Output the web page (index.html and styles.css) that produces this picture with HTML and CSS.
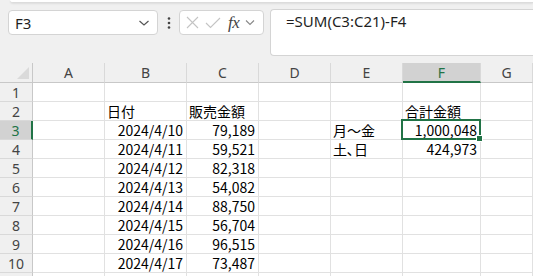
FILE: index.html
```html
<!DOCTYPE html>
<html lang="ja">
<head>
  <meta charset="UTF-8">
  <meta name="viewport" content="width=device-width, initial-scale=1.0">
  <title>Sheet1</title>
  <link rel="stylesheet" href="styles.css">
</head>
<body>
  <div class="ribbon-edge"></div>

  <div class="toolbar">
    <div class="name-box">
      <span>F3</span>
      <svg class="chev" width="12" height="8" viewBox="0 0 12 8"><path d="M1.5 2 L6 6 L10.5 2" fill="none" stroke="#555" stroke-width="1.2"/></svg>
    </div>
    <div class="dots">
      <svg width="4" height="12" viewBox="0 0 4 12"><circle cx="2" cy="1.5" r="1.3" fill="#444"/><circle cx="2" cy="6" r="1.3" fill="#444"/><circle cx="2" cy="10.5" r="1.3" fill="#444"/></svg>
    </div>
    <div class="fx-box">
      <svg width="13" height="13" viewBox="0 0 13 13"><path d="M1 1 L12 12 M12 1 L1 12" stroke="#c4c4c4" stroke-width="1.1"/></svg>
      <svg width="16" height="12" viewBox="0 0 16 12"><path d="M1 6 L5.5 10.5 L15 1" fill="none" stroke="#c4c4c4" stroke-width="1.1"/></svg>
      <span class="fx">fx</span>
      <svg width="10" height="7" viewBox="0 0 10 7"><path d="M1 1.5 L5 5.5 L9 1.5" fill="none" stroke="#888" stroke-width="1.1"/></svg>
    </div>
    <div class="formula">=SUM(C3:C21)-F4</div>
  </div>

  <div class="sheet">
    <div class="hd corner"><span class="tri"></span></div>
    <div class="hd col">A</div>
    <div class="hd col">B</div>
    <div class="hd col">C</div>
    <div class="hd col">D</div>
    <div class="hd col">E</div>
    <div class="hd col on">F</div>
    <div class="hd col">G</div>

    <div class="hd row">1</div>
    <div class="c"></div><div class="c"></div><div class="c"></div><div class="c"></div><div class="c"></div><div class="c"></div><div class="c"></div>

    <div class="hd row">2</div>
    <div class="c"></div><div class="c jp">日付</div><div class="c jp">販売金額</div><div class="c"></div><div class="c"></div><div class="c jp">合計金額</div><div class="c"></div>

    <div class="hd row on">3</div>
    <div class="c"></div><div class="c num">2024/4/10</div><div class="c num">79,189</div><div class="c"></div><div class="c jp">月～金</div>
    <div class="c num active">1,000,048<span class="sel"><span class="handle"></span></span></div><div class="c"></div>

    <div class="hd row">4</div>
    <div class="c"></div><div class="c num">2024/4/11</div><div class="c num">59,521</div><div class="c"></div><div class="c jp">土､日</div><div class="c num">424,973</div><div class="c"></div>

    <div class="hd row">5</div>
    <div class="c"></div><div class="c num">2024/4/12</div><div class="c num">82,318</div><div class="c"></div><div class="c"></div><div class="c"></div><div class="c"></div>

    <div class="hd row">6</div>
    <div class="c"></div><div class="c num">2024/4/13</div><div class="c num">54,082</div><div class="c"></div><div class="c"></div><div class="c"></div><div class="c"></div>

    <div class="hd row">7</div>
    <div class="c"></div><div class="c num">2024/4/14</div><div class="c num">88,750</div><div class="c"></div><div class="c"></div><div class="c"></div><div class="c"></div>

    <div class="hd row">8</div>
    <div class="c"></div><div class="c num">2024/4/15</div><div class="c num">56,704</div><div class="c"></div><div class="c"></div><div class="c"></div><div class="c"></div>

    <div class="hd row">9</div>
    <div class="c"></div><div class="c num">2024/4/16</div><div class="c num">96,515</div><div class="c"></div><div class="c"></div><div class="c"></div><div class="c"></div>

    <div class="hd row">10</div>
    <div class="c"></div><div class="c num">2024/4/17</div><div class="c num">73,487</div><div class="c"></div><div class="c"></div><div class="c"></div><div class="c"></div>

    <div class="hd row"></div>
    <div class="c"></div><div class="c"></div><div class="c"></div><div class="c"></div><div class="c"></div><div class="c"></div><div class="c"></div>
  </div>
</body>
</html>
```

FILE: styles.css
```css
body {
  margin: 0;
  background: #f0f0f0;
  font-family: "Noto Sans", sans-serif;
  overflow: hidden;
}
.ribbon-edge {
  height: 2px;
  margin-left: 10px;
  background: #fff;
  border-bottom: 1px solid #dcdcdc;
  border-bottom-left-radius: 4px;
  box-shadow: 0 1px 2px rgba(0, 0, 0, 0.08);
}
.toolbar {
  display: flex;
  align-items: flex-start;
  padding: 6px 0 0 8px;
}
.name-box, .fx-box {
  box-sizing: border-box;
  height: 25px;
  margin-top: 1px;
  background: #fff;
  border: 1px solid #d4d4d4;
  border-radius: 4px;
  display: flex;
  align-items: center;
}
.name-box {
  width: 150px;
  padding: 0 7px 0 6px;
  justify-content: space-between;
  font-size: 15px;
  color: #1f1f1f;
}
.dots {
  width: 21px;
  height: 25px;
  margin-top: 1px;
  display: flex;
  align-items: center;
  justify-content: center;
}
.fx-box {
  width: 85px;
  padding: 0 2px 0 6px;
  gap: 6px;
}
.fx {
  font-family: "Liberation Serif", serif;
  font-style: italic;
  font-size: 17px;
  color: #444;
  letter-spacing: -0.5px;
  margin-left: 1px;
}
.formula {
  box-sizing: border-box;
  flex: 1;
  height: 47px;
  margin-left: 6px;
  padding: 1px 0 0 15px;
  background: #fff;
  border: 1px solid #d4d4d4;
  border-right: none;
  border-radius: 4px 0 0 4px;
  font-size: 15px;
  color: #1f1f1f;
}
.sheet {
  margin-top: 7px;
  display: grid;
  grid-template-columns: 33px 72px 82px 72px 72px 72px 78px 1fr;
  grid-template-rows: 20px;
  grid-auto-rows: 19px;
}
.hd {
  box-sizing: border-box;
  font-size: 14px;
  color: #444;
  display: flex;
  align-items: center;
  justify-content: center;
}
.col {
  border-right: 1px solid #d9d9d9;
  border-bottom: 1px solid #c8c8c8;
}
.row {
  border-right: 1px solid #c8c8c8;
  border-bottom: 1px solid #d9d9d9;
}
.corner {
  position: relative;
  border-right: 1px solid #c8c8c8;
  border-bottom: 1px solid #c8c8c8;
}
.tri {
  position: absolute;
  right: 3px;
  bottom: 3px;
  border-left: 12px solid transparent;
  border-bottom: 12px solid #dadada;
}
.hd.on {
  background: #d2d2d2;
  color: #217346;
}
.col.on {
  border-bottom: 2px solid #217346;
}
.row.on {
  border-right: 2px solid #217346;
}
.c {
  box-sizing: border-box;
  background: #fff;
  border-right: 1px solid #e1e1e1;
  border-bottom: 1px solid #e1e1e1;
  font-family: "Noto Sans CJK JP", sans-serif;
  font-size: 14px;
  line-height: 18px;
  color: #000;
  padding: 0 2px;
  white-space: nowrap;
}
.num {
  text-align: right;
  padding-right: 3px;
}
.active {
  position: relative;
}
.sel {
  position: absolute;
  left: -2px;
  top: -2px;
  right: -1px;
  bottom: -1px;
  border: 2px solid #217346;
}
.handle {
  position: absolute;
  right: -4px;
  bottom: -4px;
  width: 5px;
  height: 5px;
  background: #217346;
  border: 1px solid #fff;
}
```
